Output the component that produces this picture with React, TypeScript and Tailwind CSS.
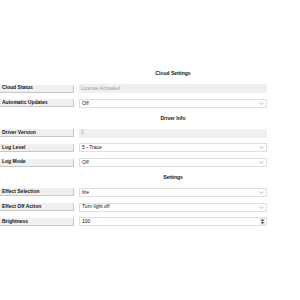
const font = { fontFamily: '"Liberation Sans", Arial, sans-serif' };

function Chevron() {
  return (
    <svg width="5" height="3" viewBox="0 0 5 3" className="mr-[2px]">
      <path d="M0.5 0.5 L2.5 2.5 L4.5 0.5" fill="none" stroke="#999" strokeWidth="0.7" />
    </svg>
  );
}

function Spinner() {
  return (
    <div className="mr-[1px] flex h-[7px] w-[5px] flex-col items-center justify-center gap-[1px] bg-[#e6e6e6]">
      <svg width="3" height="2" viewBox="0 0 3 2">
        <path d="M0 2 L1.5 0 L3 2 Z" fill="#333" />
      </svg>
      <svg width="3" height="2" viewBox="0 0 3 2">
        <path d="M0 0 L1.5 2 L3 0 Z" fill="#333" />
      </svg>
    </div>
  );
}

function Header({ title }: { title: string }) {
  return (
    <div className="grid h-[14.8px] grid-cols-[74px_188px] gap-x-[5px]">
      <div />
      <div className="flex items-center justify-center text-[5px] font-bold text-[#111]">{title}</div>
    </div>
  );
}

function Row({ label, value, kind }: { label: string; value: string; kind: 'readonly' | 'select' | 'number' }) {
  return (
    <div className="grid h-[14.8px] grid-cols-[74px_188px] items-center gap-x-[5px]">
      <div className="flex h-[8px] items-center border-b border-r border-[#c8c8c8] bg-[#f0f0f0] pl-[2px] text-[5px] font-bold text-[#111]">
        {label}
      </div>
      {kind === 'readonly' ? (
        <div className="flex h-[9px] items-center bg-[#f0f0f0] pl-[2px] text-[5px] text-[#999]">{value}</div>
      ) : (
        <div className="flex h-[9px] items-center justify-between border border-[#e0e0e0] bg-white pl-[2px] text-[5px] text-[#111]">
          <span>{value}</span>
          {kind === 'select' ? <Chevron /> : <Spinner />}
        </div>
      )}
    </div>
  );
}

export default function App() {
  return (
    <div className="h-[300px] w-[300px] bg-white pt-[66.5px]" style={font}>
      <Header title="Cloud Settings" />
      <Row label="Cloud Status" value="License Activated" kind="readonly" />
      <Row label="Automatic Updates" value="Off" kind="select" />
      <Header title="Driver Info" />
      <Row label="Driver Version" value="1" kind="readonly" />
      <Row label="Log Level" value="5 - Trace" kind="select" />
      <Row label="Log Mode" value="Off" kind="select" />
      <Header title="Settings" />
      <Row label="Effect Selection" value="fire" kind="select" />
      <Row label="Effect Off Action" value="Turn light off" kind="select" />
      <Row label="Brightness" value="100" kind="number" />
    </div>
  );
}
